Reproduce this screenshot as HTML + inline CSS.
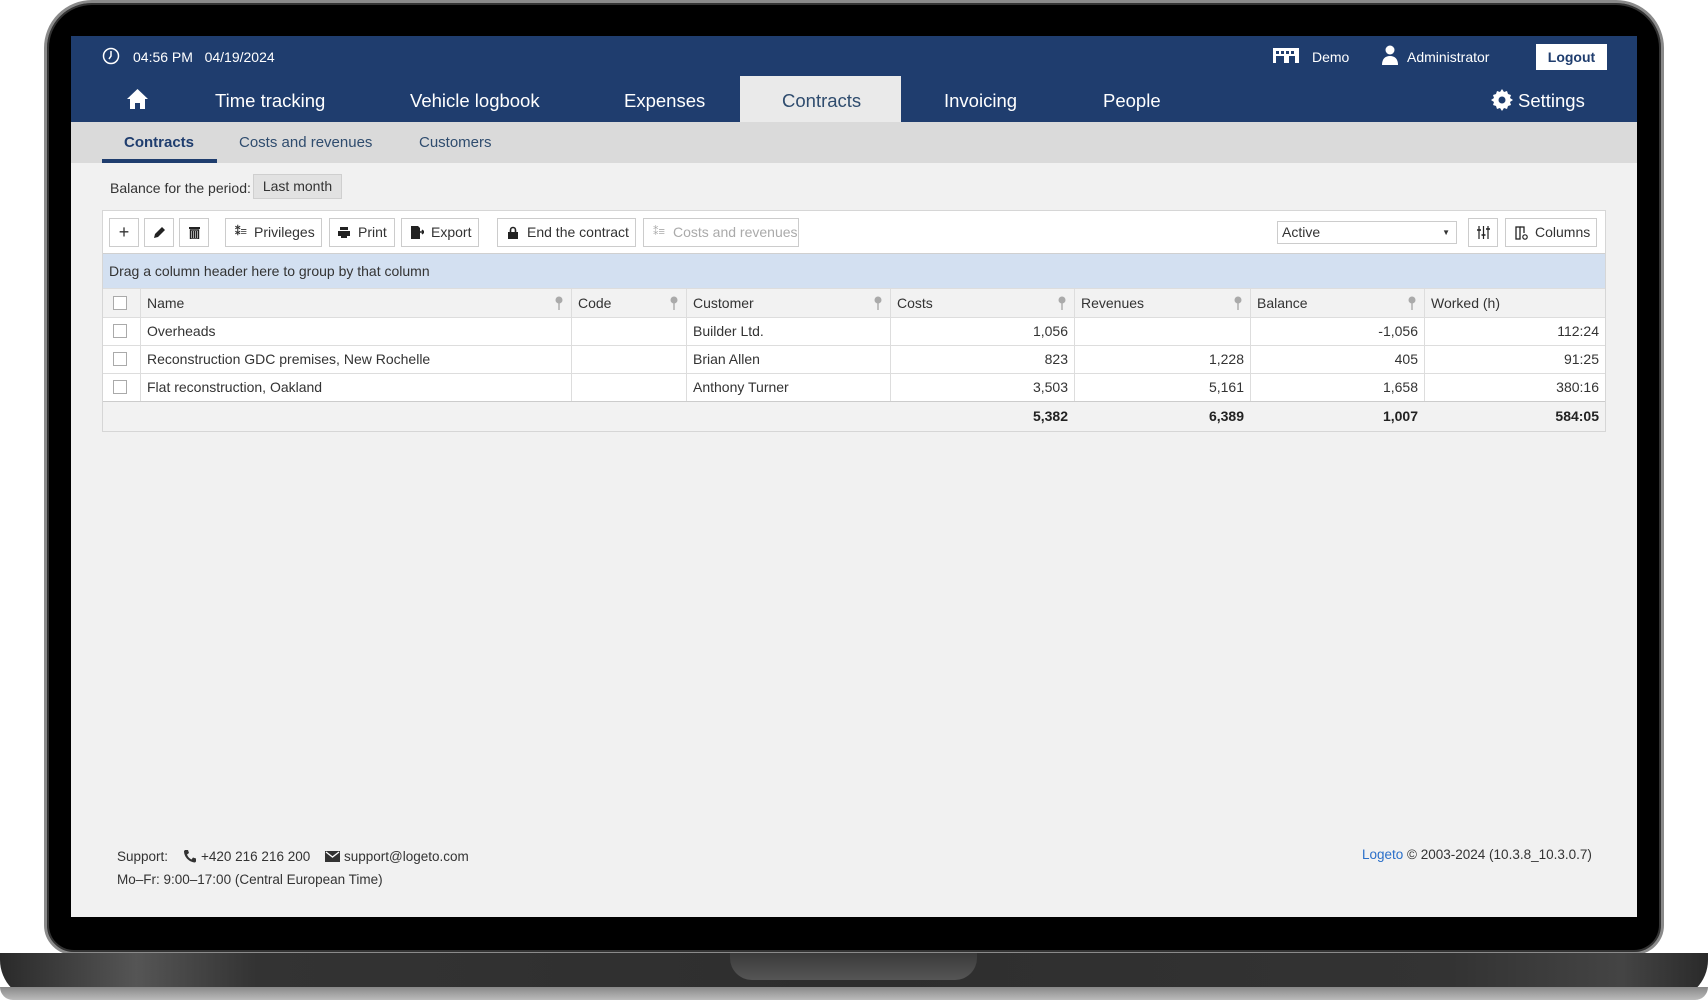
<!DOCTYPE html>
<html><head><meta charset="utf-8">
<style>
*{box-sizing:border-box;margin:0;padding:0}
body{width:1708px;height:1000px;overflow:hidden;background:#fff;font-family:"Liberation Sans",sans-serif;position:relative;color:#333}
.abs{position:absolute}
.frame{left:44px;top:0;width:1620px;height:955px;border-radius:48px 48px 30px 30px;background:#000;border:3px solid #8a8a8a;box-shadow:inset 0 0 0 2px #333}
.screen{left:71px;top:36px;width:1566px;height:881px;background:#f1f1f1;overflow:hidden}
.base{left:0;top:953px;width:1708px;height:47px;background:linear-gradient(90deg,#2a2a2a 0%,#555 8%,#333 15%,#2e2e2e 50%,#333 85%,#444 95%,#2a2a2a 100%);border-radius:0 0 40px 40px}
.base2{left:0;top:987px;width:1708px;height:13px;background:linear-gradient(#888,#bbb);border-radius:0 0 60px 60px}
.notch{left:730px;top:953px;width:247px;height:27px;background:linear-gradient(#3a3a3a,#555);border-radius:0 0 22px 22px}
.top{left:0;top:0;width:1566px;height:86px;background:#1f3d6e;color:#fff}
.t{position:absolute;font-size:14px;white-space:nowrap}
.nav{position:absolute;font-size:18.5px;top:54px;color:#fff;white-space:nowrap}
.navact{position:absolute;left:669px;top:40px;width:161px;height:46px;background:#eaeaea}
.sub{left:0;top:86px;width:1566px;height:41px;background:#dadada}
.sub span{position:absolute;top:12px;font-size:15px;color:#2f4c6e}
.btn{position:absolute;height:29px;top:7px;border:1px solid #ccc;background:#fff;font-size:14px;line-height:27px;color:#333;white-space:nowrap}
.grid{left:31px;top:174px;width:1504px;height:222px;border:1px solid #d6d6d6;background:#fff}
.row{position:absolute;left:0;width:1502px;font-size:14px}
.cell{position:absolute;top:0;height:100%;border-left:1px solid #ddd;padding:0 6px;white-space:nowrap}
.r{text-align:right}
.cb{position:absolute;left:10px;width:14px;height:14px;border:1px solid #aaa;background:#fff}
.pin{position:absolute;right:8px;top:7px;width:8px;height:14px}
</style></head><body>
<div class="abs frame"></div>
<div class="abs base"></div>
<div class="abs base2"></div>
<div class="abs notch"></div>
<div class="abs screen">
 <div class="abs top">
  <svg class="abs" style="left:31px;top:11px" width="18" height="18" viewBox="0 0 18 18"><circle cx="9" cy="9" r="7.5" fill="none" stroke="#fff" stroke-width="1.5"/><path d="M9 4v5l-2 3" stroke="#fff" stroke-width="1.5" fill="none"/></svg>
  <span class="t" style="left:62px;top:13px">04:56 PM&nbsp;&nbsp;&nbsp;04/19/2024</span>
  <svg class="abs" style="left:1201px;top:11px" width="28" height="17" viewBox="0 0 28 17"><rect x="1" y="1" width="26" height="15" fill="#fff"/><rect x="4" y="4" width="3" height="3" fill="#1f3d6e"/><rect x="9" y="4" width="3" height="3" fill="#1f3d6e"/><rect x="14" y="4" width="3" height="3" fill="#1f3d6e"/><rect x="19" y="4" width="3" height="3" fill="#1f3d6e"/><rect x="4" y="9" width="8" height="7" fill="#1f3d6e"/><rect x="17" y="9" width="6" height="7" fill="#1f3d6e"/></svg>
  <span class="t" style="left:1241px;top:13px">Demo</span>
  <svg class="abs" style="left:1310px;top:9px" width="18" height="20" viewBox="0 0 18 20"><circle cx="9" cy="5" r="4.5" fill="#fff"/><path d="M1 20c0-6 3-9 8-9s8 3 8 9z" fill="#fff"/></svg>
  <span class="t" style="left:1336px;top:13px">Administrator</span>
  <div class="abs" style="left:1465px;top:8px;width:71px;height:26px;background:#fff;color:#1f3d6e;font-weight:bold;font-size:14px;text-align:center;line-height:26px">Logout</div>
  <div class="navact"></div>
  <svg class="abs" style="left:55px;top:52px" width="23" height="21" viewBox="0 0 23 21"><path d="M11.5 1L1 11h3v10h5v-6h5v6h5V11h3z" fill="#fff"/></svg>
  <span class="nav" style="left:144px">Time tracking</span>
  <span class="nav" style="left:339px">Vehicle logbook</span>
  <span class="nav" style="left:553px">Expenses</span>
  <span class="nav" style="left:711px;color:#2f4c6e">Contracts</span>
  <span class="nav" style="left:873px">Invoicing</span>
  <span class="nav" style="left:1032px">People</span>
  <svg class="abs" style="left:1420px;top:53px" width="22" height="22" viewBox="0 0 22 22"><path d="M11 0l2 3 3-1 1 3 3 1-1 3 3 2-3 2 1 3-3 1-1 3-3-1-2 3-2-3-3 1-1-3-3-1 1-3-3-2 3-2-1-3 3-1 1-3 3 1z" fill="#fff"/><circle cx="11" cy="11" r="3.5" fill="#1f3d6e"/></svg>
  <span class="nav" style="left:1447px">Settings</span>
 </div>
 <div class="abs sub">
  <span style="left:53px;font-weight:bold;color:#1f3d6e">Contracts</span>
  <span style="left:168px">Costs and revenues</span>
  <span style="left:348px">Customers</span>
  <div class="abs" style="left:31px;top:37px;width:115px;height:4px;background:#1f3d6e"></div>
 </div>
 <span class="t" style="left:39px;top:144px;color:#333">Balance for the period:</span>
 <div class="abs" style="left:182px;top:138px;width:89px;height:25px;background:#e2e2e2;border:1px solid #cfcfcf;font-size:14px;line-height:23px;text-align:center">Last month</div>
 <div class="abs grid">
  <div class="btn" style="left:6px;width:30px;text-align:center;font-size:18px">+</div>
  <div class="btn" style="left:41px;width:30px"><svg style="position:absolute;left:8px;top:7px" width="13" height="13" viewBox="0 0 13 13"><path d="M1 12l1-4 7-7 3 3-7 7z" fill="#222"/></svg></div>
  <div class="btn" style="left:76px;width:30px"><svg style="position:absolute;left:9px;top:7px" width="11" height="13" viewBox="0 0 11 13"><rect x="0" y="1" width="11" height="2" fill="#222"/><path d="M1.5 4h8v9h-8z M3.5 5v7M5.5 5v7M7.5 5v7" fill="none" stroke="#222" stroke-width="1.4"/></svg></div>
  <div class="btn" style="left:122px;width:97px;padding-left:28px"><span style="position:absolute;left:9px;font-size:11px;font-weight:bold">⁑≡</span>Privileges</div>
  <div class="btn" style="left:226px;width:66px;padding-left:28px"><svg style="position:absolute;left:8px;top:8px" width="12" height="11" viewBox="0 0 12 11"><rect x="2" y="0" width="8" height="3" fill="#222"/><rect x="0" y="4" width="12" height="5" fill="#222"/><rect x="3" y="7" width="6" height="4" fill="#222"/></svg>Print</div>
  <div class="btn" style="left:298px;width:78px;padding-left:29px"><svg style="position:absolute;left:9px;top:7px" width="13" height="13" viewBox="0 0 13 13"><path d="M0 0h7l2 2v11H0z" fill="#222"/><path d="M8 6h5l-2-2M13 6l-2 2" stroke="#222" stroke-width="1.5" fill="none"/></svg>Export</div>
  <div class="btn" style="left:394px;width:139px;padding-left:29px"><svg style="position:absolute;left:10px;top:7px" width="10" height="13" viewBox="0 0 10 13"><path d="M2.5 6V4a2.5 2.5 0 015 0v2" stroke="#222" stroke-width="1.6" fill="none"/><rect x="0" y="6" width="10" height="7" fill="#222"/></svg>End the contract</div>
  <div class="btn" style="left:540px;width:156px;padding-left:29px;color:#aaa"><span style="position:absolute;left:9px;font-size:11px">⁑≡</span>Costs and revenues</div>
  <div class="abs" style="left:1174px;top:10px;width:180px;height:23px;border:1px solid #ccc;font-size:14px;line-height:21px;padding-left:4px">Active<span style="position:absolute;right:6px;top:0;font-size:8px">▼</span></div>
  <div class="btn" style="left:1365px;width:30px"><svg style="position:absolute;left:8px;top:7px" width="13" height="13" viewBox="0 0 13 13"><path d="M2 0v13M6.5 0v13M11 0v13" stroke="#222" stroke-width="1.2"/><path d="M0 4h4M4.5 9h4M9 3h4" stroke="#222" stroke-width="1.6"/></svg></div>
  <div class="btn" style="left:1402px;width:92px;padding-left:29px"><svg style="position:absolute;left:9px;top:7px" width="13" height="14" viewBox="0 0 13 14"><rect x="1" y="1" width="4" height="12" fill="none" stroke="#222" stroke-width="1.3"/><path d="M5 1h4v6" fill="none" stroke="#222" stroke-width="1.3"/><circle cx="10" cy="11" r="2.2" fill="none" stroke="#222" stroke-width="1.2"/></svg>Columns</div>
  <div class="row" style="top:42px;height:35px;background:#d3e0f1;border-top:1px solid #d0d0d0;padding:9px 0 0 6px">Drag a column header here to group by that column</div>
  <div class="row" style="top:77px;height:30px;background:#f2f2f2;border-top:1px solid #ddd;border-bottom:1px solid #ddd;line-height:28px">
   <div class="cb" style="top:7px"></div>
   <div class="cell" style="left:37px;width:431px">Name<svg class="pin" viewBox="0 0 8 14"><circle cx="4" cy="4" r="3.5" fill="#aaa"/><rect x="3.3" y="6" width="1.4" height="8" fill="#aaa"/></svg></div>
   <div class="cell" style="left:468px;width:115px">Code<svg class="pin" viewBox="0 0 8 14"><circle cx="4" cy="4" r="3.5" fill="#aaa"/><rect x="3.3" y="6" width="1.4" height="8" fill="#aaa"/></svg></div>
   <div class="cell" style="left:583px;width:204px">Customer<svg class="pin" viewBox="0 0 8 14"><circle cx="4" cy="4" r="3.5" fill="#aaa"/><rect x="3.3" y="6" width="1.4" height="8" fill="#aaa"/></svg></div>
   <div class="cell" style="left:787px;width:184px">Costs<svg class="pin" viewBox="0 0 8 14"><circle cx="4" cy="4" r="3.5" fill="#aaa"/><rect x="3.3" y="6" width="1.4" height="8" fill="#aaa"/></svg></div>
   <div class="cell" style="left:971px;width:176px">Revenues<svg class="pin" viewBox="0 0 8 14"><circle cx="4" cy="4" r="3.5" fill="#aaa"/><rect x="3.3" y="6" width="1.4" height="8" fill="#aaa"/></svg></div>
   <div class="cell" style="left:1147px;width:174px">Balance<svg class="pin" viewBox="0 0 8 14"><circle cx="4" cy="4" r="3.5" fill="#aaa"/><rect x="3.3" y="6" width="1.4" height="8" fill="#aaa"/></svg></div>
   <div class="cell" style="left:1321px;width:181px">Worked (h)</div>
  </div>
  <div class="row" style="top:107px;height:28px;border-bottom:1px solid #ddd;line-height:27px">
   <div class="cb" style="top:6px"></div>
   <div class="cell" style="left:37px;width:431px">Overheads</div><div class="cell" style="left:468px;width:115px"></div>
   <div class="cell" style="left:583px;width:204px">Builder Ltd.</div><div class="cell r" style="left:787px;width:184px">1,056</div>
   <div class="cell r" style="left:971px;width:176px"></div><div class="cell r" style="left:1147px;width:174px">-1,056</div>
   <div class="cell r" style="left:1321px;width:181px">112:24</div>
  </div>
  <div class="row" style="top:135px;height:28px;border-bottom:1px solid #ddd;line-height:27px">
   <div class="cb" style="top:6px"></div>
   <div class="cell" style="left:37px;width:431px">Reconstruction GDC premises, New Rochelle</div><div class="cell" style="left:468px;width:115px"></div>
   <div class="cell" style="left:583px;width:204px">Brian Allen</div><div class="cell r" style="left:787px;width:184px">823</div>
   <div class="cell r" style="left:971px;width:176px">1,228</div><div class="cell r" style="left:1147px;width:174px">405</div>
   <div class="cell r" style="left:1321px;width:181px">91:25</div>
  </div>
  <div class="row" style="top:163px;height:28px;border-bottom:1px solid #ccc;line-height:27px">
   <div class="cb" style="top:6px"></div>
   <div class="cell" style="left:37px;width:431px">Flat reconstruction, Oakland</div><div class="cell" style="left:468px;width:115px"></div>
   <div class="cell" style="left:583px;width:204px">Anthony Turner</div><div class="cell r" style="left:787px;width:184px">3,503</div>
   <div class="cell r" style="left:971px;width:176px">5,161</div><div class="cell r" style="left:1147px;width:174px">1,658</div>
   <div class="cell r" style="left:1321px;width:181px">380:16</div>
  </div>
  <div class="row" style="top:191px;height:29px;background:#f2f2f2;line-height:29px;font-weight:bold;color:#222">
   <div class="r" style="position:absolute;left:787px;width:184px;padding-right:6px">5,382</div>
   <div class="r" style="position:absolute;left:971px;width:176px;padding-right:6px">6,389</div>
   <div class="r" style="position:absolute;left:1147px;width:174px;padding-right:6px">1,007</div>
   <div class="r" style="position:absolute;left:1321px;width:181px;padding-right:6px">584:05</div>
  </div>
 </div>
 <span class="t" style="left:46px;top:813px;font-size:13.5px">Support:</span>
 <svg class="abs" style="left:112px;top:813px" width="13" height="14" viewBox="0 0 13 14"><path d="M2 1l3 0 1 3-2 1.5c1 2.5 2.5 4 4.5 5L10 8.5l3 1v3l-1 1C6 13 1 8 1 2z" fill="#333"/></svg>
 <span class="t" style="left:130px;top:813px;font-size:13.5px">+420 216 216 200</span>
 <svg class="abs" style="left:254px;top:815px" width="15" height="11" viewBox="0 0 15 11"><rect width="15" height="11" fill="#333"/><path d="M1 1l6.5 5L14 1" stroke="#fff" stroke-width="1.3" fill="none"/></svg>
 <span class="t" style="left:273px;top:813px;font-size:13.5px">support@logeto.com</span>
 <span class="t" style="left:46px;top:836px;font-size:13.5px">Mo–Fr: 9:00–17:00 (Central European Time)</span>
 <span class="t" style="left:1291px;top:811px;font-size:13.5px"><span style="color:#2a6fc9">Logeto</span> © 2003-2024 (10.3.8_10.3.0.7)</span>
</div>
</body></html>
